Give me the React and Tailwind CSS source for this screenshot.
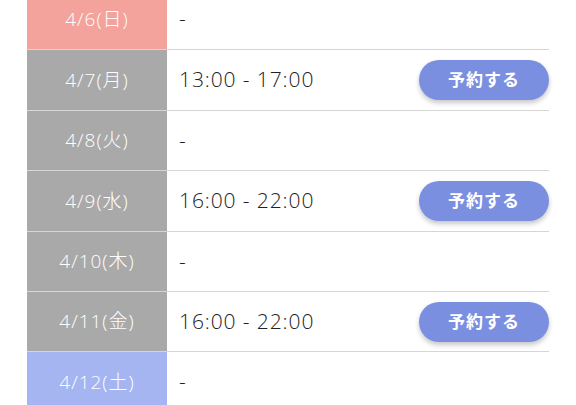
import React from "react";

const rows = [
  { d: "4/6(日)", t: "-", c: "bg-[#f3a29c]", btn: false },
  { d: "4/7(月)", t: "13:00 - 17:00", c: "bg-[#a9a9a9]", btn: true },
  { d: "4/8(火)", t: "-", c: "bg-[#a9a9a9]", btn: false },
  { d: "4/9(水)", t: "16:00 - 22:00", c: "bg-[#a9a9a9]", btn: true },
  { d: "4/10(木)", t: "-", c: "bg-[#a9a9a9]", btn: false },
  { d: "4/11(金)", t: "16:00 - 22:00", c: "bg-[#a9a9a9]", btn: true },
  { d: "4/12(土)", t: "-", c: "bg-[#a4b5f1]", btn: false },
];

export default function App() {
  return (
    <div
      className="w-[576px] h-[405px] overflow-hidden bg-white"
      style={{ fontFamily: '"Open Sans", "Noto Sans CJK JP", sans-serif' }}
    >
      <div className="mt-[-11px] ml-[27px] w-[522px] flex flex-col">
        {rows.map((r, i) => (
          <div
            key={i}
            className={`flex h-[60.4px] ${i > 0 ? "border-t-[1.5px] border-[#d6d6d6]" : ""}`}
          >
            <div
              className={`${r.c} w-[140px] flex items-center justify-center text-white text-[19px] font-light tracking-[1px]`}
            >
              {r.d}
            </div>
            <div className="flex-1 flex items-center justify-between pl-[12px]">
              <span className="text-[21px] font-light text-[#222222] tracking-[0.9px]">{r.t}</span>
              {r.btn && (
                <button className="w-[130px] h-[40px] rounded-full bg-[#7b8fe1] text-white text-[17px] font-bold shadow-[0_3px_5px_rgba(0,0,0,0.22)] tracking-[1px]">
                  予約する
                </button>
              )}
            </div>
          </div>
        ))}
      </div>
    </div>
  );
}
